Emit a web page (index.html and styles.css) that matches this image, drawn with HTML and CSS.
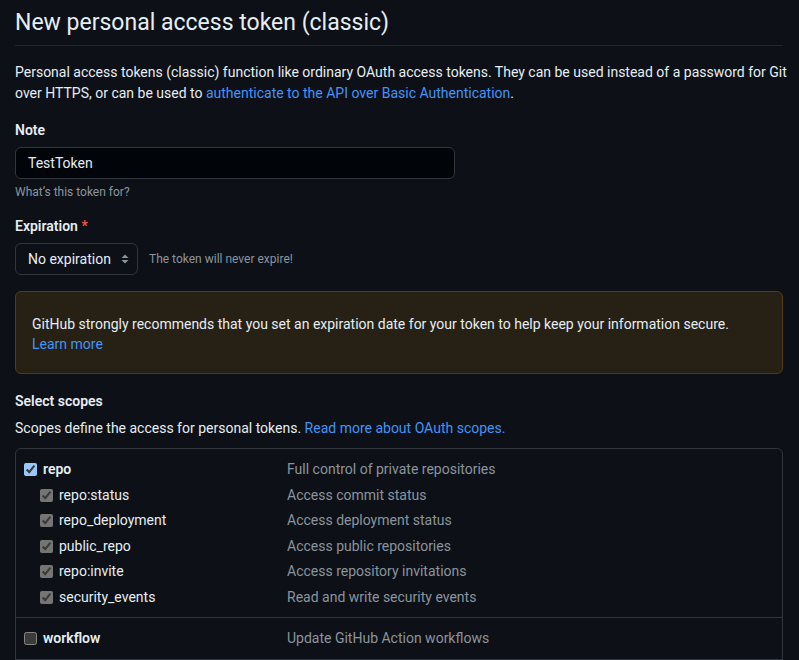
FILE: index.html
```html
<!DOCTYPE html>
<html>
<head>
    <title>New personal access token (classic)</title>
    <link rel="stylesheet" href="styles.css">
</head>
<body>
    <div class="page">
        <h1 class="subhead">New personal access token (classic)</h1>

        <p class="intro">Personal access tokens (classic) function like ordinary OAuth access tokens. They can be used instead of a password for Git over HTTPS, or can be used to <a href="#">authenticate to the API over Basic Authentication</a>.</p>

        <div class="form-group">
            <label class="form-label" for="note">Note</label>
            <input id="note" class="form-input" value="TestToken">
            <p class="note">What’s this token for?</p>
        </div>

        <div class="form-group">
            <div class="form-label">Expiration <span class="required">*</span></div>
            <div class="expiry-row">
                <div class="select-btn">
                    No expiration
                    <svg width="16" height="16" viewBox="0 0 16 16"><path d="M4.5 7 L8 3.5 L11.5 7 Z M4.5 9 L8 12.5 L11.5 9 Z" fill="#8b949e"/></svg>
                </div>
                <span class="expiry-note">The token will never expire!</span>
            </div>
        </div>

        <div class="flash-warn">
            GitHub strongly recommends that you set an expiration date for your token to help keep your information secure.<br>
            <a href="#">Learn more</a>
        </div>

        <div class="form-group">
            <div class="form-label">Select scopes</div>
            <p class="scopes-intro">Scopes define the access for personal tokens. <a href="#">Read more about OAuth scopes.</a></p>

            <div class="scopes">
                <div class="scope-group">
                    <div class="scope-row">
                        <label class="scope-name parent"><input type="checkbox" checked>repo</label>
                        <span class="scope-desc">Full control of private repositories</span>
                    </div>
                    <div class="scope-row">
                        <label class="scope-name child"><input type="checkbox" checked disabled>repo:status</label>
                        <span class="scope-desc">Access commit status</span>
                    </div>
                    <div class="scope-row">
                        <label class="scope-name child"><input type="checkbox" checked disabled>repo_deployment</label>
                        <span class="scope-desc">Access deployment status</span>
                    </div>
                    <div class="scope-row">
                        <label class="scope-name child"><input type="checkbox" checked disabled>public_repo</label>
                        <span class="scope-desc">Access public repositories</span>
                    </div>
                    <div class="scope-row">
                        <label class="scope-name child"><input type="checkbox" checked disabled>repo:invite</label>
                        <span class="scope-desc">Access repository invitations</span>
                    </div>
                    <div class="scope-row">
                        <label class="scope-name child"><input type="checkbox" checked disabled>security_events</label>
                        <span class="scope-desc">Read and write security events</span>
                    </div>
                </div>
                <div class="scope-group">
                    <div class="scope-row">
                        <label class="scope-name parent"><input type="checkbox">workflow</label>
                        <span class="scope-desc">Update GitHub Action workflows</span>
                    </div>
                </div>
                <div class="scope-group">
                    <div class="scope-row">
                        <label class="scope-name parent"><input type="checkbox">write:packages</label>
                        <span class="scope-desc">Upload packages to GitHub Package Registry</span>
                    </div>
                </div>
            </div>
        </div>
    </div>
</body>
</html>
```
FILE: styles.css
```css
:root {
    color-scheme: dark;
}
body {
    margin: 0;
    padding: 0;
    background-color: #0d1117;
    color: #e6edf3;
    font-family: Roboto, "Liberation Sans", sans-serif;
    font-size: 14px;
    line-height: 1.5;
}
a {
    color: #4493f8;
    text-decoration: none;
}
.page {
    padding: 0 16px 0 15px;
}
.subhead {
    margin: 0;
    padding: 6px 0 5px;
    font-size: 23px;
    font-weight: 400;
    line-height: 34px;
    border-bottom: 1px solid #21262d;
}
.intro {
    margin: 16px -14px 16px 0;
}
.form-group {
    margin: 15px 0;
}
.form-label {
    display: block;
    margin-bottom: 6px;
    font-weight: 600;
}
.required {
    color: #f85149;
}
.form-input {
    box-sizing: border-box;
    width: 440px;
    height: 32px;
    padding: 0 12px;
    font: inherit;
    font-size: 14px;
    color: #e6edf3;
    background-color: #010409;
    border: 1px solid #30363d;
    border-radius: 6px;
    outline: none;
}
.note {
    margin: 4px 0 2px;
    font-size: 12px;
    color: #8b949e;
}
.expiry-row {
    display: flex;
    align-items: center;
    gap: 11px;
}
.select-btn {
    box-sizing: border-box;
    display: flex;
    align-items: center;
    width: 123px;
    height: 32px;
    padding: 0 4px 0 12px;
    border: 1px solid #30363d;
    border-radius: 6px;
    background-color: #0d1117;
}
.select-btn svg {
    margin-left: auto;
}
.expiry-note {
    font-size: 12px;
    color: #8b949e;
}
.flash-warn {
    margin: 16px 0 17px;
    padding: 22px 16px 19px;
    line-height: 20px;
    background-color: #272115;
    border: 1px solid #533d11;
    border-radius: 6px;
}
.scopes-intro {
    margin: 0 0 9px;
}
.scopes {
    border: 1px solid #30363d;
    border-radius: 6px;
}
.scope-group {
    padding: 8px 0 7px;
}
.scope-group + .scope-group {
    border-top: 1px solid #30363d;
}
.scope-row {
    display: grid;
    grid-template-columns: 263px 1fr;
    align-items: center;
    height: 25.5px;
    padding-left: 8px;
}
.scope-name {
    display: flex;
    align-items: center;
    gap: 6px;
}
.scope-name input {
    width: 13px;
    height: 13px;
    margin: 0;
}
.parent {
    font-weight: 600;
}
.child {
    padding-left: 16px;
}
.scope-desc {
    color: #8b949e;
}
```
